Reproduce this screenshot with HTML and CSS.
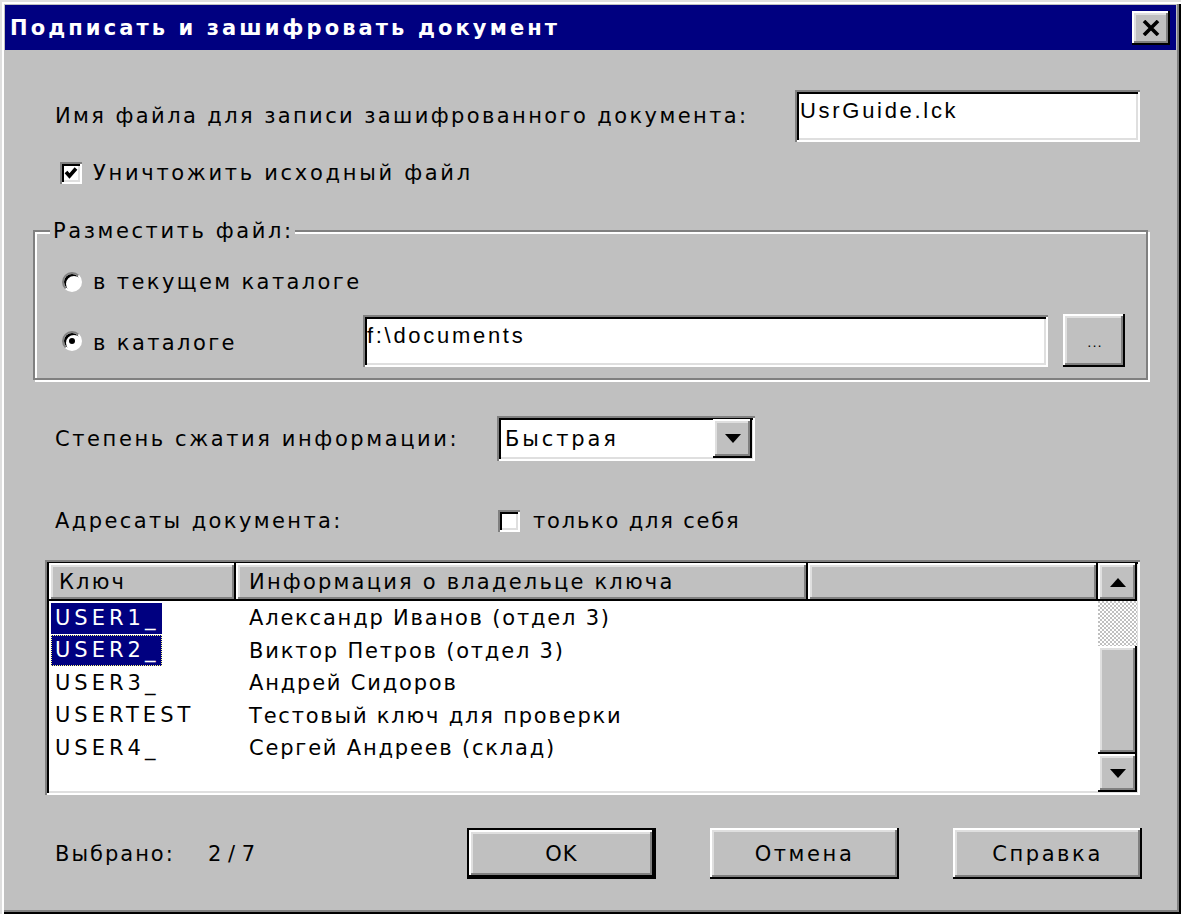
FILE: index.html
```html
<!DOCTYPE html>
<html lang="ru">
<head>
<meta charset="utf-8">
<title>Подписать и зашифровать документ</title>
<link rel="stylesheet" href="styles.css">
</head>
<body>
<div class="window">
  <div class="titlebar">
    <span class="title">Подписать и зашифровать документ</span>
    <div class="close raised">
      <svg width="18" height="16" viewBox="0 0 18 16"><path d="M2 1 L16 15 M16 1 L2 15" stroke="#000" stroke-width="3.6" fill="none"/></svg>
    </div>
  </div>
  <div class="content">
    <div class="row row-name">
      <span class="txt">Имя файла для записи зашифрованного документа:</span>
      <div class="field field-name"><span>UsrGuide.lck</span></div>
    </div>
    <div class="check-row check-destroy">
      <span class="checkbox">
        <svg width="14" height="14" viewBox="0 0 14 14"><path d="M2 6 L5.5 10 L12 2.5" stroke="#000" stroke-width="3.6" fill="none"/></svg>
      </span>
      <span class="txt">Уничтожить исходный файл</span>
    </div>
    <div class="group">
      <span class="legend txt">Разместить файл:</span>
      <div class="radio-row radio-row-1">
        <span class="radio"></span>
        <span class="txt">в текущем каталоге</span>
      </div>
      <div class="radio-row radio-row-2">
        <span class="radio on"><span class="dot"></span></span>
        <span class="txt radio-label">в каталоге</span>
        <div class="field field-dir"><span>f:\documents</span></div>
        <div class="btn btn-browse raised"><span class="dots">...</span></div>
      </div>
    </div>
    <div class="row row-combo">
      <span class="txt label-col">Степень сжатия информации:</span>
      <div class="field combo">
        <span class="combo-val">Быстрая</span>
        <span class="combo-btn raised">
          <svg width="16" height="9" viewBox="0 0 16 9"><path d="M0 0 H16 L8 9 Z" fill="#000"/></svg>
        </span>
      </div>
    </div>
    <div class="row row-recip">
      <span class="txt label-col">Адресаты документа:</span>
      <span class="checkbox"></span>
      <span class="txt recip-self">только для себя</span>
    </div>
    <div class="list">
      <div class="list-main">
        <div class="list-head">
          <div class="hcell raised c1">Ключ</div>
          <div class="hcell raised c2">Информация о владельце ключа</div>
          <div class="hcell raised c3"></div>
        </div>
        <div class="list-rows">
          <div class="lrow"><span class="c1"><span class="key sel">USER1_</span></span><span class="c2">Александр Иванов (отдел 3)</span></div>
          <div class="lrow"><span class="c1"><span class="key sel focus">USER2_</span></span><span class="c2">Виктор Петров (отдел 3)</span></div>
          <div class="lrow"><span class="c1"><span class="key">USER3_</span></span><span class="c2">Андрей Сидоров</span></div>
          <div class="lrow"><span class="c1"><span class="key">USERTEST</span></span><span class="c2">Тестовый ключ для проверки</span></div>
          <div class="lrow"><span class="c1"><span class="key">USER4_</span></span><span class="c2">Сергей Андреев (склад)</span></div>
        </div>
      </div>
      <div class="scrollbar">
        <div class="sb-btn raised">
          <svg width="16" height="9" viewBox="0 0 16 9"><path d="M0 9 H16 L8 0 Z" fill="#000"/></svg>
        </div>
        <div class="sb-track-a"></div>
        <div class="sb-thumb raised"></div>
        <div class="sb-btn raised">
          <svg width="16" height="9" viewBox="0 0 16 9"><path d="M0 0 H16 L8 9 Z" fill="#000"/></svg>
        </div>
      </div>
    </div>
    <div class="row row-bottom">
      <span class="txt sel-label">Выбрано:</span>
      <span class="txt count">2 / 7</span>
      <div class="buttons">
        <div class="btn btn-main btn-default"><span class="btn-inner raised">OK</span></div>
        <div class="btn btn-main raised">Отмена</div>
        <div class="btn btn-main raised">Справка</div>
      </div>
    </div>
  </div>
</div>
</body>
</html>
```
FILE: styles.css
```css
* { box-sizing: border-box; }
html, body { margin: 0; padding: 0; }
body {
  background: #c0c0c0;
  font-family: "DejaVu Sans", "Liberation Sans", Arial, sans-serif;
  font-size: 21px;
  color: #000;
}
.txt { letter-spacing: 2.4px; white-space: nowrap; }

.raised {
  background: #c0c0c0;
  box-shadow: inset -2px -2px 0 #000, inset 2px 2px 0 #fff, inset -4px -4px 0 #808080, inset 4px 4px 0 #dfdfdf;
}

.window {
  width: 1181px;
  height: 914px;
  background: #c0c0c0;
  padding: 5px;
  box-shadow: inset 2px 2px 0 #dfdfdf, inset 4px 4px 0 #fff, inset -2px -2px 0 #000, inset -4px -4px 0 #808080;
}

.titlebar {
  height: 45px;
  background: #000080;
  display: flex;
  align-items: center;
  justify-content: space-between;
  padding: 0 6px 0 5px;
}
.title {
  color: #fff;
  font-weight: bold;
  font-size: 21px;
  letter-spacing: 3.1px;
  white-space: nowrap;
}
.close {
  width: 38px;
  height: 34px;
  display: flex;
  align-items: center;
  justify-content: center;
}

.content {
  padding: 40px 28px 0 28px;
}
.row {
  display: flex;
  align-items: center;
}
.row-name {
  margin-left: 22px;
  margin-right: 8px;
  justify-content: space-between;
}
.field {
  background: #fff;
  box-shadow: inset 2px 2px 0 #808080, inset -2px -2px 0 #fff, inset 4px 4px 0 #000, inset -4px -4px 0 #dfdfdf;
  display: flex;
  align-items: center;
  padding: 0 6px;
  font-family: "Liberation Sans", Arial, sans-serif;
  font-size: 22px;
  letter-spacing: 2.7px;
  white-space: nowrap;
}
.field-name {
  width: 345px;
  height: 52px;
  align-items: flex-start;
  padding: 8px 4px 0 5px;
}

.check-row {
  display: flex;
  align-items: center;
  gap: 11px;
}
.check-destroy {
  margin: 20px 0 0 27px;
  height: 22px;
}
.check-destroy .txt { letter-spacing: 2.7px; }
.checkbox {
  width: 22px;
  height: 22px;
  background: #fff;
  box-shadow: inset 2px 2px 0 #808080, inset -2px -2px 0 #fff, inset 4px 4px 0 #000, inset -4px -4px 0 #dfdfdf;
  display: flex;
  align-items: center;
  justify-content: center;
  flex: none;
}

.group {
  position: relative;
  margin-top: 46px;
  height: 150px;
  border: 2px solid #808080;
  box-shadow: inset 2px 2px 0 #fff, 2px 2px 0 #fff;
  padding: 35px 20px 0 27px;
}
.legend {
  position: absolute;
  top: -14px;
  left: 15px;
  background: #c0c0c0;
  padding: 0 1px 0 3px;
  line-height: 26px;
  letter-spacing: 2.6px;
}
.radio-row {
  display: flex;
  align-items: center;
}
.radio-row-1 {
  height: 30px;
}
.radio-row-2 {
  height: 53px;
  margin-top: 17px;
}
.radio {
  width: 20px;
  height: 20px;
  border-radius: 50%;
  background: #fff;
  border: 2px solid;
  border-color: #808080 #fff #fff #808080;
  box-shadow: inset 2px 2px 0 #000;
  margin-right: 11px;
  display: flex;
  align-items: center;
  justify-content: center;
  flex: none;
}
.dot {
  width: 6px;
  height: 6px;
  border-radius: 50%;
  background: #000;
}
.radio-label {
  width: 270px;
  position: relative;
  top: 2px;
}
.field-dir {
  width: 685px;
  height: 52px;
  align-items: flex-start;
  padding: 8px 4px 0 4px;
}
.btn-browse {
  width: 62px;
  height: 53px;
  margin-left: 15px;
  display: flex;
  align-items: center;
  justify-content: center;
}
.dots {
  font-size: 13px;
  letter-spacing: 1px;
  position: relative;
  top: 2px;
  left: 1px;
}

.row-combo {
  margin: 36px 0 0 22px;
}
.label-col {
  width: 442px;
}
.row-combo .label-col { letter-spacing: 2.6px; }
.combo {
  width: 258px;
  height: 45px;
  justify-content: space-between;
  padding: 3px 3px 3px 8px;
  font-family: "DejaVu Sans", "Liberation Sans", sans-serif;
  font-size: 21px;
}
.combo-val { letter-spacing: 2.9px; }
.combo-btn {
  width: 39px;
  height: 39px;
  display: flex;
  align-items: center;
  justify-content: center;
}

.row-recip {
  margin: 49px 0 0 22px;
  height: 22px;
}
.row-recip .label-col { width: 443px; }
.recip-self { margin-left: 13px; letter-spacing: 1.8px; }

.list {
  margin: 28px 8px 0 12px;
  height: 235px;
  background: #fff;
  padding: 3px 3px 3px 4px;
  box-shadow: inset 2px 2px 0 #808080, inset -2px -2px 0 #fff, inset 4px 4px 0 #000, inset -4px -4px 0 #dfdfdf;
  display: flex;
}
.list-main {
  flex: 1;
  display: flex;
  flex-direction: column;
}
.list-head {
  display: flex;
  height: 38px;
  flex: none;
}
.hcell {
  height: 38px;
  display: flex;
  align-items: center;
  padding-left: 10px;
  letter-spacing: 2.2px;
  white-space: nowrap;
}
.hcell.c1 { width: 187px; }
.hcell.c2 { width: 572px; padding-left: 13px; }
.hcell.c3 { flex: 1; }
.list-rows {
  padding-top: 1px;
}
.lrow {
  display: flex;
  height: 32.5px;
  align-items: center;
  white-space: nowrap;
  letter-spacing: 1.8px;
}
.lrow .c1 {
  width: 187px;
  padding-left: 2px;
}
.lrow .c2 {
  padding-left: 13px;
}
.key {
  display: inline-block;
  padding: 2px 3px 3px 4px;
  line-height: 26px;
  letter-spacing: 4px;
}
.sel {
  background: #000080;
  color: #fff;
}
.focus {
  outline: 1px dotted #ffff80;
  outline-offset: -1px;
}

.scrollbar {
  width: 39px;
  flex: none;
  display: flex;
  flex-direction: column;
}
.sb-btn {
  height: 38px;
  flex: none;
  display: flex;
  align-items: center;
  justify-content: center;
}
.sb-track-a {
  height: 45px;
  flex: none;
  background: repeating-conic-gradient(#fff 0 25%, #c0c0c0 0 50%) 0 0 / 4px 4px;
}
.sb-thumb {
  flex: 1;
}

.row-bottom {
  margin: 32px 6px 0 22px;
  height: 53px;
}
.sel-label {
  width: 153px;
  letter-spacing: 2px;
}
.count { letter-spacing: 0; }
.buttons {
  margin-left: auto;
  display: flex;
  gap: 54px;
}
.btn-main {
  width: 189px;
  height: 51px;
  display: flex;
  align-items: center;
  justify-content: center;
  letter-spacing: 2.6px;
  white-space: nowrap;
}
.btn-default {
  border: 2px solid #000;
  padding: 0;
}
.btn-inner {
  width: 100%;
  height: 100%;
  display: flex;
  align-items: center;
  justify-content: center;
  letter-spacing: 1px;
}
```
